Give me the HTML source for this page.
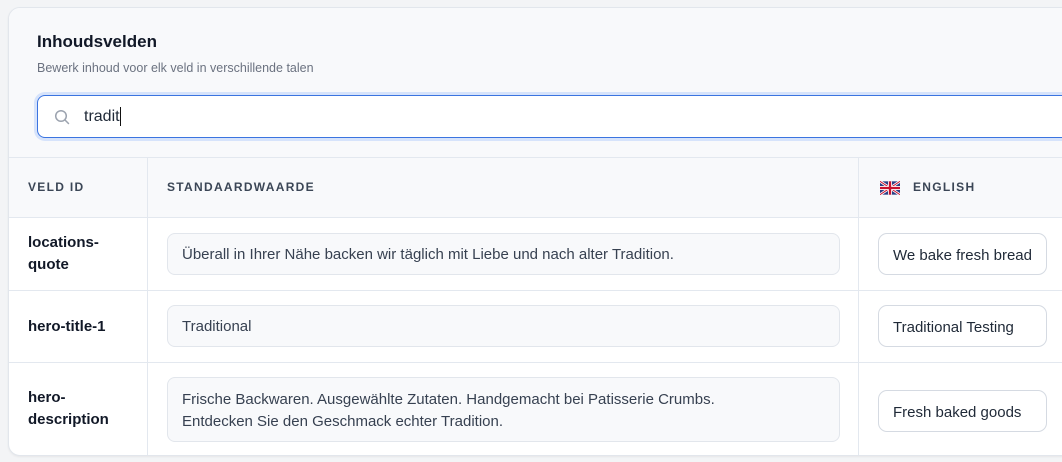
<!DOCTYPE html>
<html><head><style>
*{box-sizing:border-box;margin:0;padding:0}
body{width:1062px;height:462px;background:#f3f4f6;font-family:"Liberation Sans",Helvetica,Arial,sans-serif;overflow:hidden;position:relative;color:#111827}
.card{position:absolute;left:8px;top:7px;width:1070px;height:449px;background:#fff;border:1px solid #e2e6ec;border-radius:12px;overflow:hidden;box-shadow:0 1px 2px rgba(0,0,0,.06)}
.top{position:absolute;left:0;top:0;right:0;height:150px;background:#f8f9fb;border-bottom:1px solid #e3e8ef}
h1{position:absolute;left:28px;top:24px;font-size:17px;font-weight:bold;color:#111827}
.sub{position:absolute;left:28px;top:53px;font-size:12.5px;color:#6b7280}
.search{position:absolute;left:28px;top:87px;width:1060px;height:43px;background:#fff;border:1.5px solid #3b74e0;border-radius:8px;box-shadow:0 0 0 3px #d6e3fb}
.search svg{position:absolute;left:16px;top:13px}
.search span{position:absolute;left:46px;top:11px;font-size:16px;color:#1f2937;border-right:1.5px solid #111;line-height:19px}
.hdr{position:absolute;left:0;top:150px;right:0;height:60px;background:#f8f9fb;border-bottom:1px solid #e3e8ef}
.th{position:absolute;top:22px;font-size:12px;letter-spacing:1.3px;font-weight:bold;color:#3b4656}
.vl{position:absolute;top:150px;bottom:0;width:1px;background:#e3e8ef}
.row{position:absolute;left:0;right:0;border-bottom:1px solid #e3e8ef}
.id{position:absolute;left:19px;font-size:15px;font-weight:bold;color:#111827;line-height:22px}
.def{position:absolute;left:158px;width:673px;background:#f8f9fb;border:1px solid #e2e6ec;border-radius:8px;padding:2px 14px 0;font-size:15px;color:#374151;line-height:22px;display:flex;align-items:center}
.en{position:absolute;left:869px;width:169px;height:42px;background:#fff;border:1px solid #d5dae2;border-radius:9px;padding:2px 14px 0;font-size:15px;color:#1f2937;line-height:40px;white-space:nowrap;overflow:hidden}
</style></head><body>
<div class="card">
<div class="top"></div>
<h1>Inhoudsvelden</h1>
<div class="sub">Bewerk inhoud voor elk veld in verschillende talen</div>
<div class="search"><svg width="16" height="16" viewBox="0 0 16 16" fill="none" stroke="#9ca3af" stroke-width="1.5"><circle cx="7" cy="7" r="5.3"/><path d="M11 11l3.5 3.5" stroke-linecap="round"/></svg><span>tradit</span></div>
<div class="hdr">
<div class="th" style="left:19px">VELD ID</div>
<div class="th" style="left:158px">STANDAARDWAARDE</div>
<svg style="position:absolute;left:871px;top:23px" width="20" height="14" viewBox="0 0 60 40"><rect width="60" height="40" fill="#2b3f86"/><path d="M0 0L60 40M60 0L0 40" stroke="#fff" stroke-width="8"/><path d="M0 0L60 40M60 0L0 40" stroke="#c8102e" stroke-width="3"/><path d="M30 0V40M0 20H60" stroke="#fff" stroke-width="12"/><path d="M30 0V40M0 20H60" stroke="#c8102e" stroke-width="7"/></svg>
<div class="th" style="left:904px">ENGLISH</div>
</div>
<div class="vl" style="left:138px"></div>
<div class="vl" style="left:849px"></div>
<div class="row" style="top:210px;height:73px">
<div class="id" style="top:14px">locations-<br>quote</div>
<div class="def" style="top:15px;height:42px">Überall in Ihrer Nähe backen wir täglich mit Liebe und nach alter Tradition.</div>
<div class="en" style="top:15px">We bake fresh bread</div>
</div>
<div class="row" style="top:283px;height:72px">
<div class="id" style="top:25px">hero-title-1</div>
<div class="def" style="top:14px;height:42px">Traditional</div>
<div class="en" style="top:14px">Traditional Testing</div>
</div>
<div class="row" style="top:355px;height:100px;border:none">
<div class="id" style="top:24px">hero-<br>description</div>
<div class="def" style="top:14px;height:65px">Frische Backwaren. Ausgewählte Zutaten. Handgemacht bei Patisserie Crumbs.<br>Entdecken Sie den Geschmack echter Tradition.</div>
<div class="en" style="top:27px">Fresh baked goods</div>
</div>
</div>
</body></html>
